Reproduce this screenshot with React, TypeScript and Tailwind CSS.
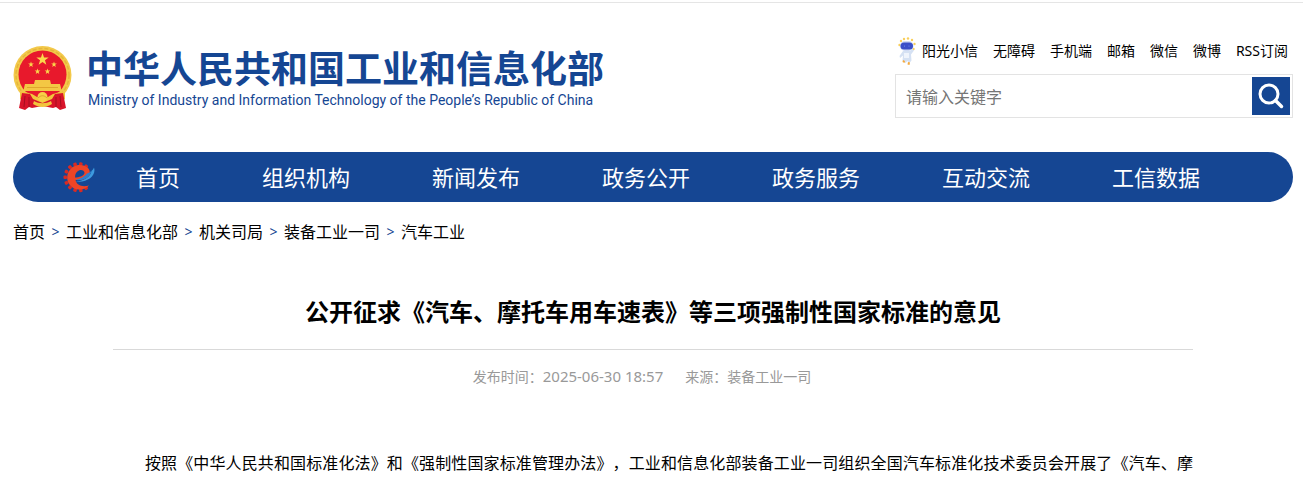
import { useState } from 'react';

const topLinks = ['无障碍', '手机端', '邮箱', '微信', '微博', 'RSS订阅'];

const navItems = [
  '首页',
  '组织机构',
  '新闻发布',
  '政务公开',
  '政务服务',
  '互动交流',
  '工信数据'
];

const crumbs = ['首页', '工业和信息化部', '机关司局', '装备工业一司', '汽车工业'];

const gearTeeth = [55, 80, 105, 130, 155, 180, 205, 230, 255, 280, 305];

// 五角星
const STAR =
  'M0 -1 L0.235 -0.324 L0.951 -0.309 L0.38 0.124 L0.588 0.809 L0 0.4 L-0.588 0.809 L-0.38 0.124 L-0.951 -0.309 L-0.235 -0.324Z';

function Emblem() {
  return (
    <svg viewBox="0 0 60 66" className="h-[66px] w-[60px] shrink-0" aria-hidden="true">
      <circle cx="29.500" cy="30" r="29" fill="#f3c94a" />
      <circle
        cx="29.500"
        cy="30"
        r="26.500"
        fill="none"
        stroke="#e5b53a"
        strokeWidth="1.500"
        strokeDasharray="4 2"
      />
      <circle cx="29.500" cy="29.500" r="24" fill="#e8192c" />
      <path d={STAR} transform="translate(29.500 14.500) scale(6.500)" fill="#fbd84b" />
      <path d={STAR} transform="translate(18 19.500) scale(3)" fill="#fbd84b" />
      <path d={STAR} transform="translate(41 19.500) scale(3)" fill="#fbd84b" />
      <path d={STAR} transform="translate(24.500 26.500) scale(3)" fill="#fbd84b" />
      <path d={STAR} transform="translate(34.500 26.500) scale(3)" fill="#fbd84b" />
      {/* 天安门 */}
      <path d="M22 35h15l1 4h9l1 4v3H11v-3l1-4h9z" fill="#f3c744" />
      <path d="M14 42.500h31" stroke="#e0a52c" strokeWidth="1" />
      {/* 麦穗与绶带 */}
      <path
        d="M7 47c8 0 13 2 17 5l5.500 2 5.500-2c4-3 9-5 17-5v7c-6 4-13 7-22.500 7S13 58 7 54z"
        fill="#f2c53d"
      />
      <path
        d="M9 48l8 1 3 5 9.500 4 9.500-4 3-5 8-1 3 15-3 1-3 1-4-3-3 1-10.500-2-10.500 2-3-1-4 3-3-1-3-1z"
        fill="#d8142a"
      />
      <path
        d="M12 51l-1 11M16 52v10M47 51l1 11M43 52v10"
        stroke="#a60e20"
        strokeWidth="1"
      />
      <circle cx="29.500" cy="52" r="5" fill="#f7cf48" />
      <path d="M25 53c3-3 6-3 9 0" fill="none" stroke="#dda52c" />
      <path d="M21 56c5 3 12 3 17 0l1 3c-6 4-13 4-19 0z" fill="#f2c53d" />
    </svg>
  );
}

function RobotIcon() {
  return (
    <svg viewBox="0 0 18 28" className="h-7 w-[18px]" aria-hidden="true">
      <g fill="#f9cf5c">
        <circle cx="3" cy="4" r="1.200" />
        <circle cx="6" cy="2" r="1.200" />
        <circle cx="10" cy="1.500" r="1.200" />
        <circle cx="14" cy="3" r="1.200" />
        <circle cx="16.500" cy="7" r="1.200" />
        <circle cx="1.500" cy="8" r="1.200" />
        <circle cx="15.500" cy="12" r="1.200" />
      </g>
      <rect x="2" y="4" width="13.500" height="10" rx="5" fill="#cfdaf3" />
      <rect x="2.500" y="5.500" width="12.500" height="7" rx="3.500" fill="#3a4fc8" />
      <circle cx="6.500" cy="9" r="0.500" fill="#7d9bff" />
      <circle cx="11" cy="9" r="0.500" fill="#7d9bff" />
      <path
        d="M5 14h7l2.500-2 1.500 1.500-3 4 .5 6-2 2.500-2-2-2 2-3-2.500.5-5-3 2.500-.5-2z"
        fill="#d5e1f3"
      />
      <path d="M6 16h5v5H6z" fill="#eff4fc" />
      <path d="M5 23l2 1-.5 2-2-1zM10 25l2 .5-.5 2.500-2-.5z" fill="#f5a93c" />
    </svg>
  );
}

function GearLogo() {
  return (
    <svg viewBox="0 0 32 32" className="size-8" aria-hidden="true">
      {gearTeeth.map((deg) => (
        <rect
          key={deg}
          x="27"
          y="14.500"
          width="3.500"
          height="3.500"
          rx="1"
          fill="#d92a23"
          transform={`rotate(${deg} 15.500 16.250)`}
        />
      ))}
      {/* e 字形的红色环 */}
      <path
        d="M26 24.500C20.500 31 9.500 29.500 5.500 22C1.500 13 8 4 16.500 4C24 4 28 8.500 26.500 13C25 17.500 19 19.500 12.500 19C13.500 24 19 26.500 26 24.500ZM12 16.500C16 16.500 21 15 21.500 12C21.500 9.500 18.500 8.500 16 9.500C13.500 10.500 12 13 12 16.500Z"
        fill="#ee4526"
        fillRule="evenodd"
      />
      <path
        d="M31 6.500C33.500 14 25.500 22 12.500 20.500C21 20 27.500 16 28.500 10C29.500 9 30.500 8 31 6.500Z"
        fill="#3d9ade"
      />
      <path
        d="M28.500 9.500C28 15.500 21 20 12.500 19C18 17.500 22 15.500 24 12.500C25.500 12 27.500 11 28.500 9.500Z"
        fill="#2b7fce"
      />
    </svg>
  );
}

function SearchBox() {
  const [keyword, setKeyword] = useState('');

  return (
    <form
      onSubmit={(e) => e.preventDefault()}
      className="flex h-11 items-center border border-[#e3e3e3] pr-0.5"
    >
      <input
        type="text"
        aria-label="关键字"
        placeholder="请输入关键字"
        value={keyword}
        onChange={(e) => setKeyword(e.target.value)}
        className="h-full min-w-0 flex-1 px-2.5 pt-0.5 text-base outline-none placeholder:text-[#757575]"
      />
      <button
        type="submit"
        aria-label="搜索"
        className="flex size-[38px] items-center justify-center bg-[#154693]"
      >
        <svg viewBox="0 0 26 26" className="size-[26px]" fill="none" stroke="#fff">
          <circle cx="11" cy="11" r="9" strokeWidth="3" />
          <path d="M17.500 17.500L23.500 23.500" strokeWidth="3.500" strokeLinecap="round" />
        </svg>
      </button>
    </form>
  );
}

export default function App() {
  return (
    <div
      lang="zh-CN"
      className="mt-0.5 border-t border-[#e5e5e5] bg-white pr-2.5 pl-[13px] font-['Noto_Sans','Noto_Sans_CJK_SC',sans-serif] text-black [text-spacing-trim:space-all]"
    >
      {/* 顶部 logo + 搜索 */}
      <header className="flex items-start justify-between pt-8">
        <a href="#" className="mt-2.5 flex">
          <Emblem />
          <div className="ml-[13px] whitespace-nowrap text-[#154693]">
            <div className="text-[37px] leading-[48px] font-bold">
              中华人民共和国工业和信息化部
            </div>
            <div className="pl-0.5 font-['Roboto',sans-serif] text-sm leading-[14px]">
              Ministry of Industry and Information Technology of the People’s
              Republic of China
            </div>
          </div>
        </a>

        <div className="w-[398px]">
          <div className="flex h-8 items-center justify-end gap-[15px] pr-[5px] text-sm whitespace-nowrap">
            <a href="#" className="flex items-center gap-1.5">
              <RobotIcon />
              阳光小信
            </a>
            {topLinks.map((t) => (
              <a key={t} href="#">
                {t}
              </a>
            ))}
          </div>
          <div className="mt-[7px]">
            <SearchBox />
          </div>
        </div>
      </header>

      {/* 主导航 */}
      <nav className="mt-[34px] flex h-[50px] items-center rounded-full bg-[#154693] pl-[50px] text-[22px] whitespace-nowrap text-white">
        <GearLogo />
        <ul className="ml-[41px] flex gap-[82px]">
          {navItems.map((item) => (
            <li key={item}>
              <a href="#">{item}</a>
            </li>
          ))}
        </ul>
      </nav>

      {/* 面包屑 */}
      <div className="mt-[18px] flex items-center text-base leading-6">
        {crumbs.map((c, i) => (
          <div key={c} className="flex items-center">
            {i > 0 && (
              <span className="w-[21px] text-center text-sm text-[#154693]">&gt;</span>
            )}
            <a href="#">{c}</a>
          </div>
        ))}
      </div>

      {/* 正文 */}
      <article className="mx-[100px] mt-[51px]">
        <h1 className="border-b border-[#d9d9d9] pb-[21px] text-center text-2xl leading-[33px] font-bold">
          公开征求《汽车、摩托车用车速表》等三项强制性国家标准的意见
        </h1>
        <div className="mt-[15px] flex justify-center text-sm leading-6 text-[#999]">
          <span className="mr-[22px]">
            发布时间：<time className="text-[15px] leading-4">2025-06-30 18:57</time>
          </span>
          <span className="mr-[22px]">来源：装备工业一司</span>
        </div>
        <p className="mt-[58px] pl-8 text-justify text-base leading-8 [text-align-last:justify]">
          按照《中华人民共和国标准化法》和《强制性国家标准管理办法》，工业和信息化部装备工业一司组织全国汽车标准化技术委员会开展了《汽车、摩
        </p>
      </article>
    </div>
  );
}
